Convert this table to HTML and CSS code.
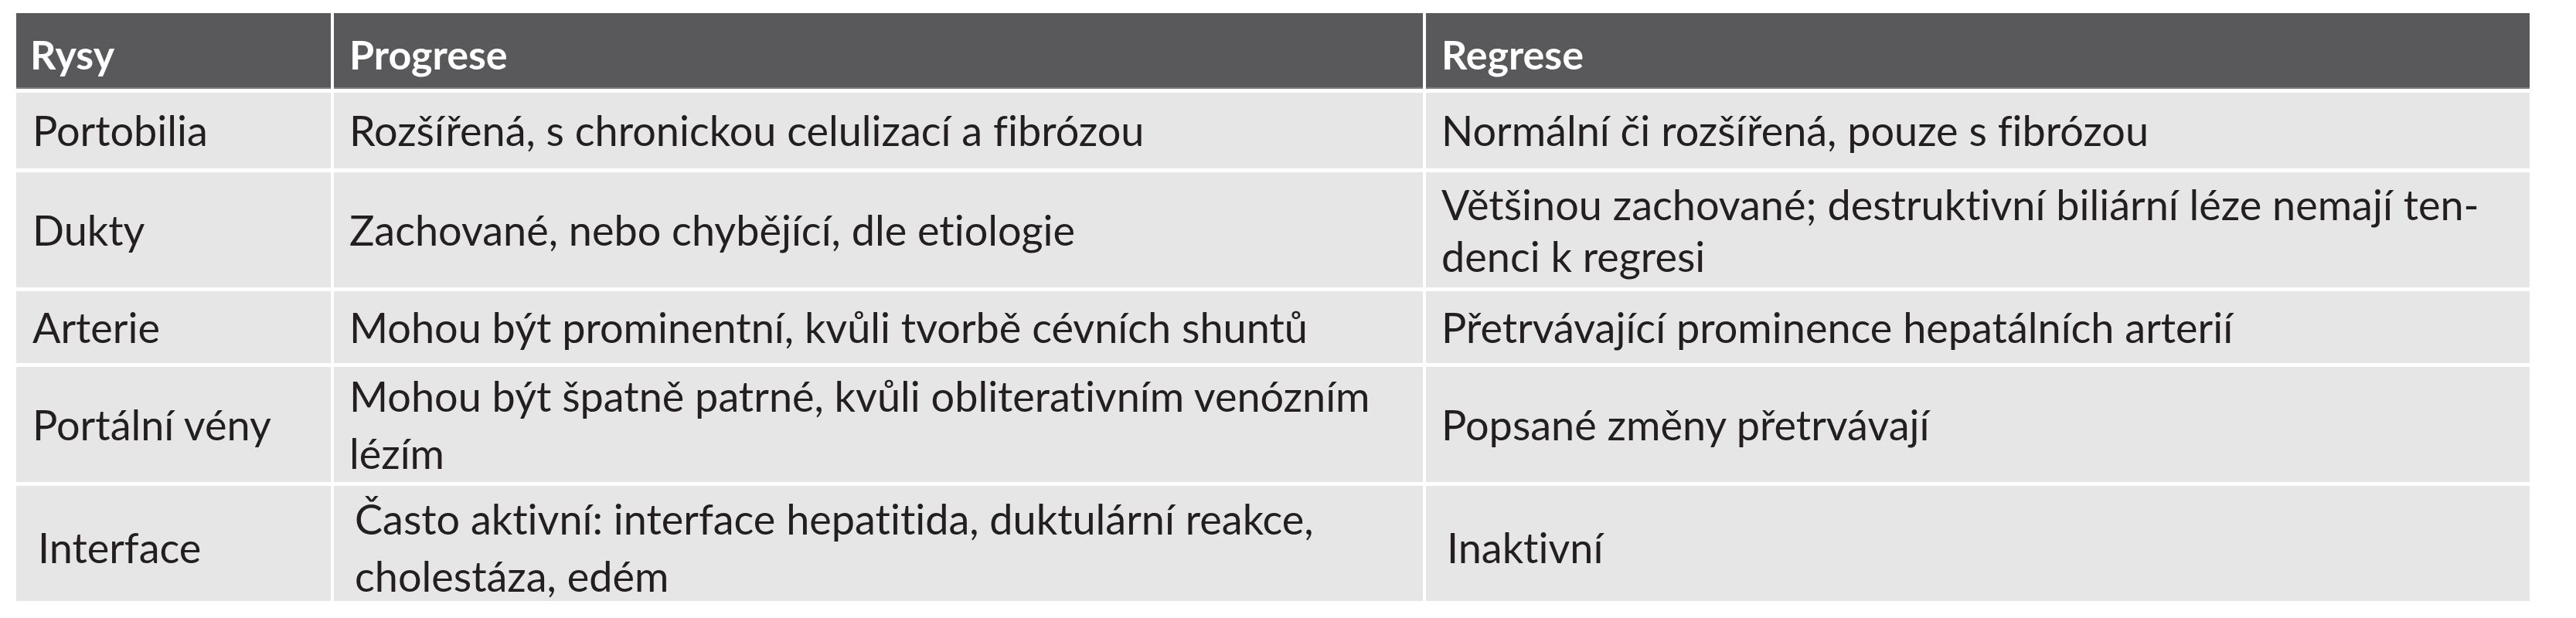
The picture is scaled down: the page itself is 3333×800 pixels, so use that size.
FILE: index.html
```html
<!DOCTYPE html>
<html lang="cs">
<head>
<meta charset="utf-8">
<title>Rysy – progrese a regrese</title>
<link rel="stylesheet" href="styles.css">
</head>
<body>
<div class="tbl">
  <div class="cell head c1">Rysy</div>
  <div class="cell head c2">Progrese</div>
  <div class="cell head c3">Regrese</div>

  <div class="cell c1">Portobilia</div>
  <div class="cell c2">Rozšířená, s chronickou celulizací a fibrózou</div>
  <div class="cell c3">Normální či rozšířená, pouze s fibrózou</div>

  <div class="cell c1">Dukty</div>
  <div class="cell c2">Zachované, nebo chybějící, dle etiologie</div>
  <div class="cell c3 two tight">Většinou zachované; destruktivní biliární léze nemají ten-<br>denci k regresi</div>

  <div class="cell c1">Arterie</div>
  <div class="cell c2">Mohou být prominentní, kvůli tvorbě cévních shuntů</div>
  <div class="cell c3">Přetrvávající prominence hepatálních arterií</div>

  <div class="cell c1">Portální vény</div>
  <div class="cell c2 two">Mohou být špatně patrné, kvůli obliterativním venózním<br>lézím</div>
  <div class="cell c3">Popsané změny přetrvávají</div>

  <div class="cell c1 last">Interface</div>
  <div class="cell c2 last two">Často aktivní: interface hepatitida, duktulární reakce,<br>cholestáza, edém</div>
  <div class="cell c3 last">Inaktivní</div>
</div>
</body>
</html>
```
FILE: styles.css
```css
html, body {
  margin: 0;
  padding: 0;
  background: #ffffff;
}

body {
  padding: 17px 0 0 21px;
  font-family: Lato, "Liberation Sans", sans-serif;
}

.tbl {
  display: grid;
  grid-template-columns: 407px 1409px 1428px;
  grid-template-rows: 98px 98px 149px 93px 149px 149px;
  column-gap: 4px;
  row-gap: 5px;
  width: max-content;
}

.cell {
  display: flex;
  align-items: center;
  background: #e6e6e6;
  color: #231f20;
  font-size: 54px;
  line-height: 74px;
  padding-left: 20px;
  white-space: nowrap;
  font-variant-ligatures: none;
}

.cell.c1 {
  padding-left: 21px;
}

.cell.head {
  background: #59595b;
  color: #ffffff;
  font-weight: 700;
  font-size: 52px;
  padding-top: 8px;
  padding-left: 18px;
  box-shadow: inset 0 -2px 0 #7f7f81;
}

.cell.head.c2,
.cell.head.c3 {
  padding-left: 20px;
}

.cell.two.tight {
  line-height: 67px;
}

.cell.last {
  padding-left: 27px;
  padding-top: 10px;
}

.cell.c1.last {
  padding-left: 28px;
}
```
